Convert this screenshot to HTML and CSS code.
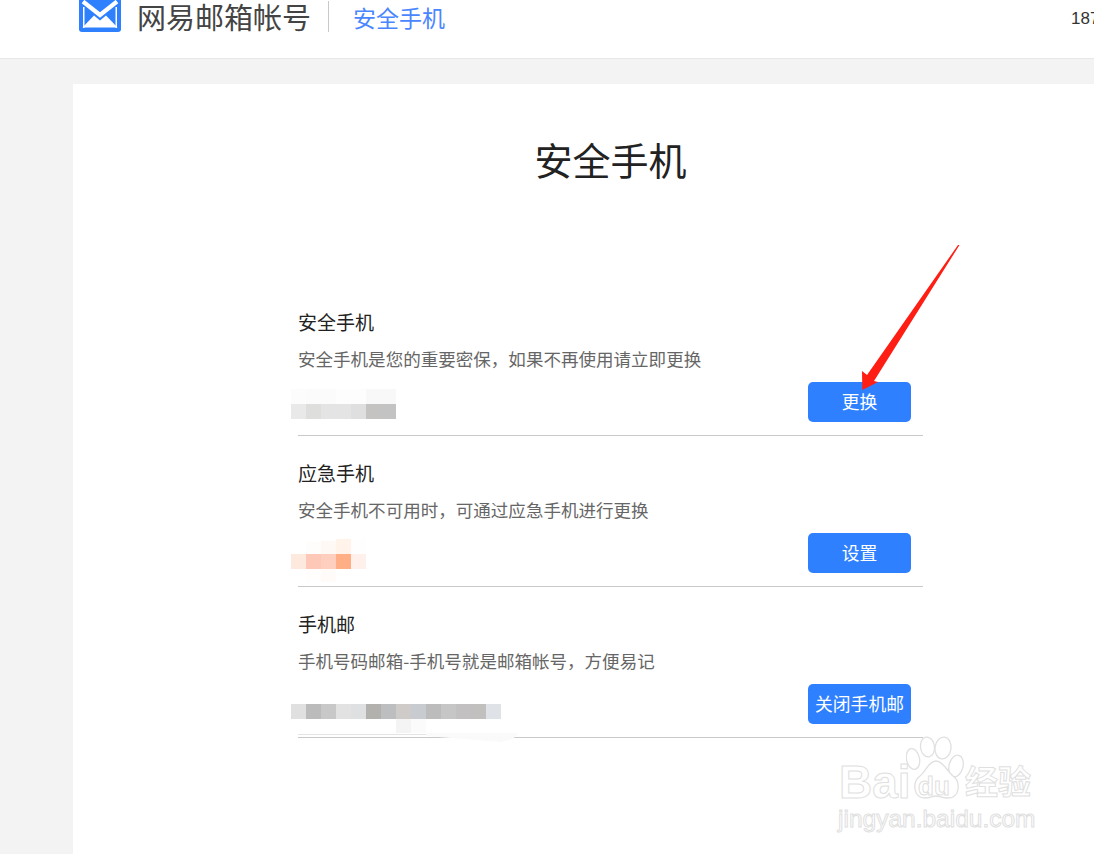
FILE: index.html
```html
<!DOCTYPE html>
<html lang="zh-CN">
<head>
<meta charset="utf-8">
<title>安全手机</title>
<link rel="stylesheet" href="styles.css">
</head>
<body>
<header class="topbar">
  <svg class="logo" width="42" height="34" viewBox="0 0 42 34">
    <rect x="0" y="-8" width="42" height="42" rx="3" fill="#2e80ff"/>
    <path d="M4 3.5 L21 17 L38 3.5" fill="none" stroke="#fff" stroke-width="4.2"/>
    <path d="M4 9 L4 30 L5.5 30 L5.5 9 Z M36.5 9 L36.5 30 L38 30 L38 9 Z" fill="#fff"/>
    <path d="M3.5 29.5 L15 17.5 L21 22.5 L27 17.5 L38.5 29.5 Z" fill="#fff"/>
  </svg>
  <span class="brand">网易邮箱帐号</span>
  <span class="divider"></span>
  <span class="section">安全手机</span>
  <span class="account">187</span>
</header>
<main class="card">
  <h1 class="card-title">安全手机</h1>
  <section class="list">
    <article class="row">
      <h2 class="row-title">安全手机</h2>
      <p class="row-desc">安全手机是您的重要密保，如果不再使用请立即更换</p>
      <div class="row-foot">
        <svg class="mosaic" width="105" height="66" viewBox="0 0 105 66">
          <rect x="0" y="7" width="15" height="15" fill="#fcfcfc"/>
          <rect x="15" y="7" width="30" height="15" fill="#fbfbfb"/>
          <rect x="45" y="7" width="30" height="15" fill="#fdfdfd"/>
          <rect x="75" y="7" width="30" height="15" fill="#f8f8f8"/>
          <rect x="0" y="22" width="15" height="15" fill="#e9e9e9"/>
          <rect x="15" y="22" width="15" height="15" fill="#dededc"/>
          <rect x="30" y="22" width="30" height="15" fill="#e4e4e4"/>
          <rect x="60" y="22" width="15" height="15" fill="#dfdfdf"/>
          <rect x="75" y="22" width="15" height="15" fill="#c4c3c2"/>
          <rect x="90" y="22" width="15" height="15" fill="#c3c3c4"/>
        </svg>
        <button class="action">更换</button>
      </div>
    </article>
    <article class="row">
      <h2 class="row-title">应急手机</h2>
      <p class="row-desc">安全手机不可用时，可通过应急手机进行更换</p>
      <div class="row-foot">
        <svg class="mosaic" width="75" height="66" viewBox="0 0 75 66">
          <rect x="15" y="9" width="15" height="12" fill="#fffdfc"/>
          <rect x="30" y="8" width="15" height="13" fill="#fef9f5"/>
          <rect x="45" y="6" width="15" height="15" fill="#fff3ea"/>
          <rect x="60" y="6" width="15" height="15" fill="#fefefe"/>
          <rect x="0" y="21" width="15" height="15" fill="#fee9df"/>
          <rect x="15" y="21" width="15" height="15" fill="#fec8b8"/>
          <rect x="30" y="21" width="15" height="15" fill="#fecfbf"/>
          <rect x="45" y="21" width="15" height="15" fill="#ffae85"/>
          <rect x="60" y="21" width="15" height="15" fill="#fff0ec"/>
          <rect x="15" y="36" width="15" height="12" fill="#fffefc"/>
          <rect x="30" y="36" width="15" height="13" fill="#fffbf9"/>
        </svg>
        <button class="action">设置</button>
      </div>
    </article>
    <article class="row">
      <h2 class="row-title">手机邮</h2>
      <p class="row-desc">手机号码邮箱-手机号就是邮箱帐号，方便易记</p>
      <div class="row-foot">
        <svg class="mosaic" width="230" height="66" viewBox="0 0 230 66">
          <rect x="0" y="20" width="15" height="15" fill="#e0e0e0"/>
          <rect x="15" y="20" width="15" height="15" fill="#bbbbbb"/>
          <rect x="30" y="20" width="15" height="15" fill="#c8c8c8"/>
          <rect x="45" y="20" width="15" height="15" fill="#e2e2e2"/>
          <rect x="60" y="20" width="15" height="15" fill="#dfe0e2"/>
          <rect x="75" y="20" width="15" height="15" fill="#b2b1ad"/>
          <rect x="90" y="20" width="15" height="15" fill="#bdbec0"/>
          <rect x="105" y="20" width="15" height="15" fill="#cfcbc8"/>
          <rect x="120" y="20" width="15" height="15" fill="#c8ccd0"/>
          <rect x="135" y="20" width="15" height="15" fill="#bcbcbc"/>
          <rect x="150" y="20" width="15" height="15" fill="#c6c6c6"/>
          <rect x="165" y="20" width="15" height="15" fill="#c2c0c0"/>
          <rect x="180" y="20" width="15" height="15" fill="#c2c0be"/>
          <rect x="195" y="20" width="15" height="15" fill="#dfe3e7"/>
          <rect x="105" y="35" width="15" height="14" fill="#f4f4f4"/>
          <rect x="120" y="35" width="15" height="14" fill="#fbfbfb"/>
          <path d="M7 50 L135 50 L135 51 L7 51 Z" fill="#e4e4e4"/>
          <path d="M135 49 L227 49 L222 55 L210 58 L135 52 Z" fill="#fafafa"/>
        </svg>
        <button class="action">关闭手机邮</button>
      </div>
    </article>
  </section>
</main>
<svg class="arrow" width="100" height="150" viewBox="0 0 100 150">
  <polygon points="97.5,0 96,0 5,130 0,126 0.3,145 16,137 12,136" fill="#ff1e14"/>
</svg>
<div class="watermark">
  <span class="wm-bai">Bai</span>
  <svg class="wm-paw" width="62" height="70" viewBox="0 0 62 70">
    <g fill="#fff" stroke="#e0e0e0" stroke-width="1.3">
      <ellipse cx="7" cy="24" rx="6.5" ry="10.5" transform="rotate(-12 7 24)"/>
      <ellipse cx="21.5" cy="12" rx="7" ry="10" transform="rotate(-8 21.5 12)"/>
      <ellipse cx="37" cy="13" rx="8" ry="11" transform="rotate(8 37 13)"/>
      <ellipse cx="50" cy="31" rx="7" ry="11" transform="rotate(14 50 31)"/>
      <path d="M30 26 C23 26 20 36 14 41 C6 47 7 63 19 63 C25 63 26 61 30 61 C34 61 36 63 42 63 C54 63 55 47 47 41 C41 36 37 26 30 26 Z"/>
    </g>
  </svg>
  <span class="wm-du">du</span>
  <span class="wm-cn">经验</span>
  <span class="wm-url">jingyan.baidu.com</span>
</div>
</body>
</html>
```
FILE: styles.css
```css
* { box-sizing: border-box; }
html, body { margin: 0; height: 854px; overflow: hidden; }
body {
  position: relative;
  background: #f3f3f3;
  font-family: "Noto Sans CJK SC", "Liberation Sans", sans-serif;
}
.topbar {
  display: flex;
  align-items: flex-end;
  height: 59px;
  padding: 0 0 26px 79px;
  background: #fff;
  border-bottom: 1px solid #e8e8e8;
  white-space: nowrap;
  overflow: hidden;
}
.logo { flex: none; display: block; }
.brand {
  flex: none;
  margin-left: 16px;
  font-size: 29px;
  line-height: 32px;
  color: #444;
}
.divider {
  flex: none;
  width: 1px;
  height: 31px;
  margin-left: 17px;
  background: #c9c9c9;
}
.section {
  flex: none;
  margin-left: 24px;
  font-size: 23px;
  line-height: 30px;
  color: #4a86ff;
}
.account {
  flex: none;
  margin: 0 0 -2px 626px;
  font-size: 17px;
  line-height: 30px;
  color: #333;
  font-family: "Liberation Sans", sans-serif;
}
.card {
  width: 1075px;
  height: 770px;
  margin: 25px 0 0 73px;
  padding-top: 48px;
  background: #fff;
}
.card-title {
  margin: 0 0 99px;
  text-align: center;
  font-size: 38px;
  line-height: 54px;
  font-weight: 400;
  color: #222;
}
.list { width: 625px; margin: 0 auto; }
.row {
  height: 151px;
  padding: 23px 12px 13px 0;
  border-bottom: 1px solid #c9c9c9;
}
.row-title {
  margin: 0 0 9px;
  font-size: 19px;
  line-height: 28px;
  font-weight: 400;
  color: #222;
}
.row-desc {
  margin: 0 0 9px;
  font-size: 17.55px;
  line-height: 28px;
  color: #666;
}
.row-foot {
  display: flex;
  justify-content: space-between;
  align-items: flex-start;
  height: 40px;
}
.mosaic {
  flex: none;
  display: block;
  margin-left: -7px;
  position: relative;
}
.action {
  flex: none;
  width: 103px;
  height: 40px;
  padding: 0 0 2px;
  border: 0;
  border-radius: 5px;
  background: #2e80ff;
  color: #fff;
  font: 400 17.8px/38px "Noto Sans CJK SC", "Liberation Sans", sans-serif;
}
.arrow {
  position: absolute;
  left: 862px;
  top: 245px;
}
.watermark {
  position: absolute;
  left: 838px;
  top: 735px;
  width: 200px;
  height: 96px;
  color: #fff;
  -webkit-text-stroke: 1px #e0e0e0;
  white-space: nowrap;
}
.wm-bai, .wm-du, .wm-cn, .wm-url { position: absolute; }
.wm-bai {
  left: 1px;
  top: 22px;
  font: 700 46px/50px "Liberation Sans", sans-serif;
}
.wm-paw { position: absolute; left: 68px; top: 0; }
.wm-du {
  left: 80px;
  top: 37px;
  font: 700 26px/28px "Liberation Sans", sans-serif;
}
.wm-cn {
  left: 127px;
  top: 23px;
  font: 700 33px/44px "Noto Sans CJK SC", sans-serif;
}
.wm-url {
  left: 0;
  top: 70px;
  font: 400 24.5px/28px "Liberation Sans", sans-serif;
}
```
